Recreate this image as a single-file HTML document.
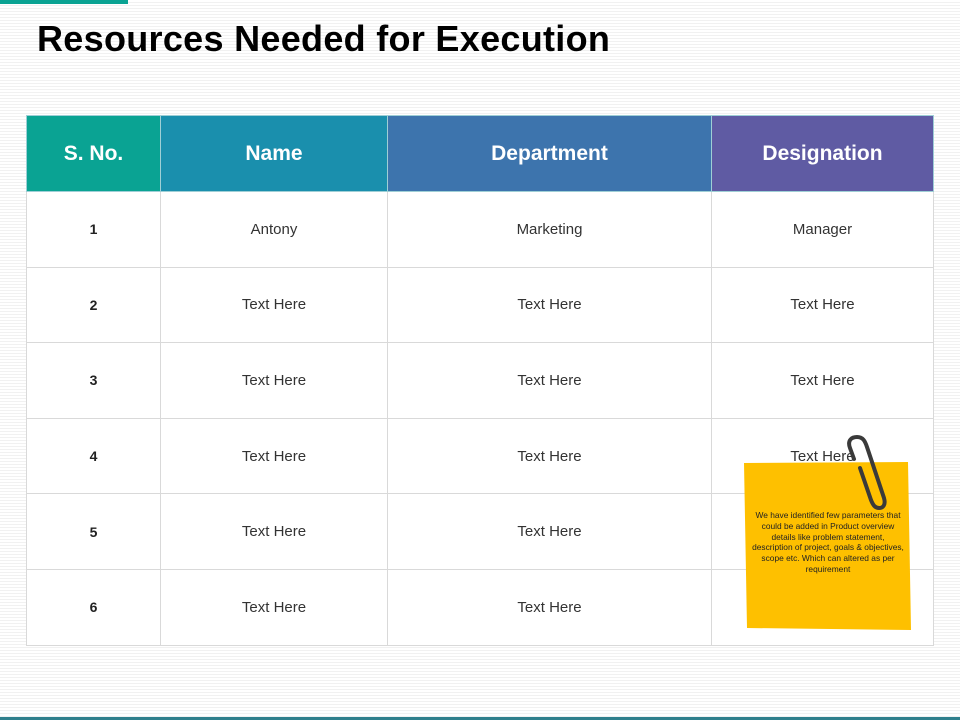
<!DOCTYPE html>
<html><head><meta charset="utf-8"><style>
html,body{margin:0;padding:0}
body{width:960px;height:720px;position:relative;overflow:hidden;
background:repeating-linear-gradient(180deg,#ffffff 0px,#ffffff 2px,#f1f1f1 2px,#f1f1f1 3px);
font-family:"Liberation Sans",sans-serif}
.topbar{position:absolute;left:0;top:0;width:128px;height:4px;background:#0aa393}
.bot{position:absolute;left:0;top:717px;width:960px;height:3px;background:#2f7f8c}
h1{position:absolute;left:37px;top:18px;margin:0;font-size:36px;font-weight:bold;color:#000;letter-spacing:0.3px}
table{position:absolute;left:26px;top:115px;border-collapse:collapse;background:#fff}
td,th{border:1px solid #d9d9d9;text-align:center;padding:0}
th{height:75px;color:#fff;font-size:21px;font-weight:bold;border-color:#9fcfd6}
td{height:74.6px;font-size:15px;color:#333}
td.n{font-weight:bold;font-size:14px;color:#222}
.note{position:absolute;left:744px;top:462px;width:167px;height:168px;background:#fec000;
clip-path:polygon(0 1px,164px 0,167px 168px,3px 166px);}
.nt{position:absolute;left:752px;top:510px;width:152px;text-align:center;font-size:8.4px;line-height:10.8px;color:#222}
</style></head><body>
<div class="topbar"></div>
<h1>Resources Needed for Execution</h1>
<table>
<tr><th style="width:133px;background:#0aa393">S. No.</th><th style="width:226px;background:#1a8fad">Name</th><th style="width:323px;background:#3d74ad">Department</th><th style="width:221px;background:#5f5ba3">Designation</th></tr>
<tr><td class="n">1</td><td>Antony</td><td>Marketing</td><td>Manager</td></tr>
<tr><td class="n">2</td><td>Text Here</td><td>Text Here</td><td>Text Here</td></tr>
<tr><td class="n">3</td><td>Text Here</td><td>Text Here</td><td>Text Here</td></tr>
<tr><td class="n">4</td><td>Text Here</td><td>Text Here</td><td>Text Here</td></tr>
<tr><td class="n">5</td><td>Text Here</td><td>Text Here</td><td></td></tr>
<tr><td class="n">6</td><td>Text Here</td><td>Text Here</td><td></td></tr>
</table>
<div class="note"></div>
<div class="nt">We have identified few parameters that could be added in Product overview details like problem statement, description of project, goals &amp; objectives, scope etc. Which can altered as per requirement</div>
<svg style="position:absolute;left:840px;top:432px" width="60" height="85" viewBox="0 0 60 85">
<path d="M14 27 L10 16 C7 8 12 5 17 5 C23 5 25 9 27 15 L44 66 C46 73 43 76 39 76 C35 76 33 73 31 68 L20 36" fill="none" stroke="#3a3a3a" stroke-width="4" stroke-linecap="round"/>
</svg>
<div class="bot"></div>
</body></html>
